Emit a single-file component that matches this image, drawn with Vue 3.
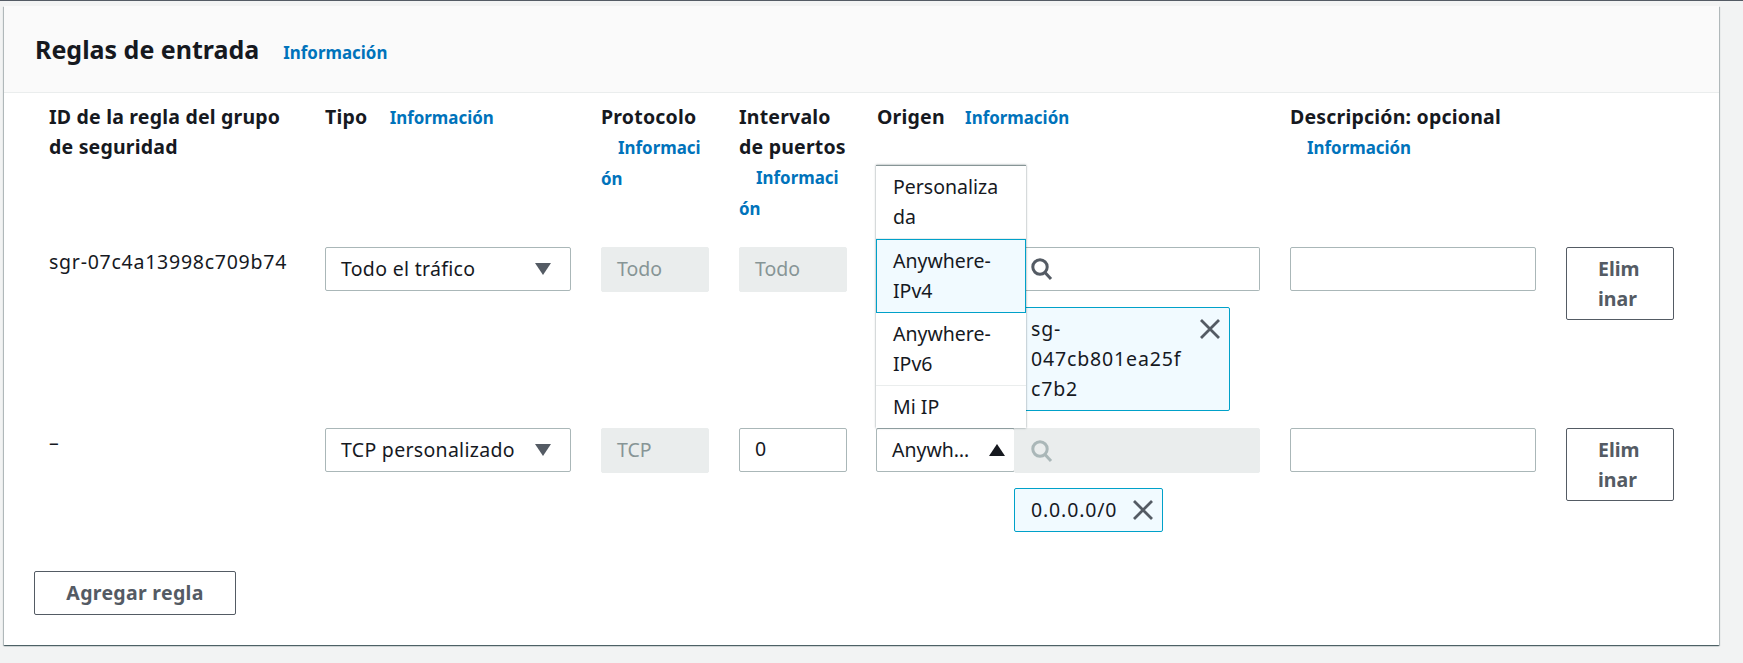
<template>
  <div class="page">
    <section class="card">
      <header class="card__header">
        <h2 class="card__title">Reglas de entrada</h2>
        <a class="info info--title">Información</a>
      </header>

      <div class="rules">
        <div class="rules__head">
          <div class="head-cell">ID de la regla del grupo de seguridad</div>
          <div class="head-cell">Tipo <a class="info">Información</a></div>
          <div class="head-cell">Protocolo <a class="info">Información</a></div>
          <div class="head-cell">Intervalo de puertos <a class="info">Información</a></div>
          <div class="head-cell">Origen <a class="info info--tight">Información</a></div>
          <div class="head-cell">Descripción: opcional <a class="info">Información</a></div>
          <div class="head-cell"></div>
        </div>

        <div
          v-for="rule in rules"
          :key="rule.id"
          class="rule"
          :class="{ 'rule--first': rule.first }"
        >
          <div class="rule__id">{{ rule.id }}</div>

          <div class="field field--select">
            <span>{{ rule.type }}</span>
            <svg class="caret" viewBox="0 0 16 12" width="16" height="12"><path d="M0 0h16L8 12z" /></svg>
          </div>

          <div class="field field--disabled">{{ rule.protocol }}</div>

          <div v-if="rule.portEditable" class="field">{{ rule.port }}</div>
          <div v-else class="field field--disabled">{{ rule.port }}</div>

          <div class="source">
            <div class="field field--source">
              <template v-if="!rule.first">
                <span>Anywh…</span>
                <svg class="caret caret--up" viewBox="0 0 16 12" width="16" height="12"><path d="M8 0l8 12H0z" /></svg>
              </template>
            </div>

            <div class="source__search">
              <div class="field field--search" :class="{ 'field--search-disabled': rule.searchDisabled }">
                <svg class="search-icon" viewBox="0 0 22 24" width="22" height="24" fill="none">
                  <circle cx="9" cy="10" r="7.2" />
                  <path d="M14 15.5l6 6.5" />
                </svg>
              </div>
              <div class="token" :class="{ 'token--wide': rule.first }">
                <span class="token__text">{{ rule.token }}</span>
                <svg class="token__close" viewBox="0 0 20 20" width="20" height="20" fill="none">
                  <path d="M1 1l18 18M19 1L1 19" />
                </svg>
              </div>
            </div>

            <ul v-if="!rule.first" class="menu">
              <li
                v-for="opt in sourceOptions"
                :key="opt.label"
                class="menu__item"
                :class="{ 'menu__item--active': opt.active }"
              >
                {{ opt.label }}
              </li>
            </ul>
          </div>

          <div class="field"></div>

          <button class="btn btn--delete" type="button">Eliminar</button>
        </div>

        <button class="btn btn--add" type="button">Agregar regla</button>
      </div>
    </section>
  </div>
</template>

<script setup>
const rules = [
  {
    id: 'sgr-07c4a13998c709b74',
    first: true,
    type: 'Todo el tráfico',
    protocol: 'Todo',
    port: 'Todo',
    portEditable: false,
    searchDisabled: false,
    token: 'sg-047cb801ea25fc7b2',
  },
  {
    id: '–',
    first: false,
    type: 'TCP personalizado',
    protocol: 'TCP',
    port: '0',
    portEditable: true,
    searchDisabled: true,
    token: '0.0.0.0/0',
  },
]

const sourceOptions = [
  { label: 'Personalizada' },
  { label: 'Anywhere-IPv4', active: true },
  { label: 'Anywhere-IPv6' },
  { label: 'Mi IP' },
]
</script>

<style>
html,
body {
  margin: 0;
  background: #f2f3f3;
}
</style>

<style scoped>
.page {
  height: 663px;
  overflow: hidden;
  box-sizing: border-box;
  padding: 5px 24px 0 4px;
  border-top: 1px solid #545b64;
  font-family: 'Noto Sans', 'Liberation Sans', sans-serif;
  font-size: 19.5px;
  line-height: 30px;
  color: #16191f;
}

.card {
  height: 639px;
  box-sizing: border-box;
  background: #fff;
  box-shadow: 0 1px 1px 0 rgba(0, 28, 36, 0.5), 1px 1px 1px 0 rgba(0, 28, 36, 0.2), -1px 1px 1px 0 rgba(0, 28, 36, 0.2);
}

.card__header {
  display: flex;
  align-items: baseline;
  gap: 24px;
  height: 87px;
  box-sizing: border-box;
  padding: 28px 31px 0;
  background: #fafafa;
  border-bottom: 1px solid #eaeded;
}

.card__title {
  margin: 0;
  font-size: 25px;
  font-weight: 700;
  line-height: 30px;
}

.info {
  margin-left: 17px;
  font-size: 16.9px;
  font-weight: 700;
  letter-spacing: 0;
  color: #0073bb;
}

.info--title {
  margin-left: 0;
}

.info--tight {
  margin-left: 15px;
}

.rules {
  position: relative;
  padding-left: 45px;
}

.rules__head,
.rule {
  display: grid;
  grid-template-columns: 276px 276px 138px 138px 413px 276px 138px;
}

.rules__head {
  height: 154px;
  padding-top: 9px;
  box-sizing: border-box;
}

.head-cell {
  padding-right: 30px;
  font-weight: 700;
  letter-spacing: 0.2px;
  overflow-wrap: anywhere;
}

.rule {
  align-items: start;
  height: 181px;
}

.rule:not(.rule--first) {
  height: 143px;
}

.rule__id {
  letter-spacing: 0.75px;
}

.field {
  box-sizing: border-box;
  height: 44px;
  margin-right: 30px;
  padding: 0 15px;
  line-height: 40px;
  background: #fff;
  border: 1px solid #aab7b8;
  border-radius: 2px;
}

.field--select {
  display: flex;
  align-items: center;
  justify-content: space-between;
  letter-spacing: 0.3px;
  white-space: nowrap;
}

.field--disabled {
  height: 45px;
  line-height: 41px;
  background: #eaeded;
  border-color: #eaeded;
  color: #879596;
}

.caret {
  flex: none;
  fill: #545b64;
  margin-right: 4px;
}

.caret--up {
  fill: #16191f;
  margin-right: 0;
}

.source {
  position: relative;
  display: flex;
  align-items: flex-start;
  margin-left: -1px;
}

.field--source {
  display: flex;
  align-items: center;
  justify-content: space-between;
  flex: none;
  width: 139px;
  margin-right: 0;
  padding-right: 9px;
  white-space: nowrap;
}

.source__search {
  width: 246px;
  margin-left: -1px;
}

.field--search {
  display: flex;
  align-items: center;
  margin-right: 0;
  padding: 0 16px;
  border-left-color: transparent;
}

.field--search-disabled {
  height: 45px;
  margin-bottom: -1px;
  background: #eaeded;
  border-color: #eaeded;
}

.search-icon {
  stroke: #545b64;
  stroke-width: 3;
}

.field--search-disabled .search-icon {
  stroke: #aab7b8;
}

.token {
  display: inline-flex;
  justify-content: space-between;
  align-items: flex-start;
  box-sizing: border-box;
  margin-top: 16px;
  padding: 6px 9px 6px 16px;
  letter-spacing: 0.85px;
  background: #f1faff;
  border: 1px solid #00a1c9;
  border-radius: 2px;
}

.token--wide {
  width: 216px;
}

.token--wide .token__text {
  width: 155px;
  overflow-wrap: anywhere;
}

.token__close {
  flex: none;
  margin: 5px 0 0 16px;
  stroke: #545b64;
  stroke-width: 2.8;
}

.menu {
  position: absolute;
  left: 0;
  bottom: 100%;
  z-index: 2;
  box-sizing: border-box;
  width: 150px;
  height: 263px;
  margin: 0;
  padding: 0;
  overflow: hidden;
  list-style: none;
  background: #fff;
  border-top: 1px solid #879596;
  box-shadow: 0 0 2px rgba(0, 28, 36, 0.5);
}

.menu__item {
  box-sizing: border-box;
  padding: 6px 19px 6px 17px;
  border-bottom: 1px solid #eaeded;
  overflow-wrap: anywhere;
}

.menu__item--active {
  background: #f1faff;
  border: 1px solid #00a1c9;
  padding-left: 16px;
}

.btn {
  box-sizing: border-box;
  display: block;
  padding: 0;
  font: inherit;
  font-weight: 700;
  color: #545b64;
  background: #fff;
  border: 1px solid #545b64;
  border-radius: 2px;
}

.btn--delete {
  width: 108px;
  height: 73px;
  padding: 0 31px;
  text-align: left;
  word-break: break-all;
}

.btn--add {
  width: 202px;
  height: 44px;
  margin-left: -15px;
  letter-spacing: 0.3px;
}
</style>
